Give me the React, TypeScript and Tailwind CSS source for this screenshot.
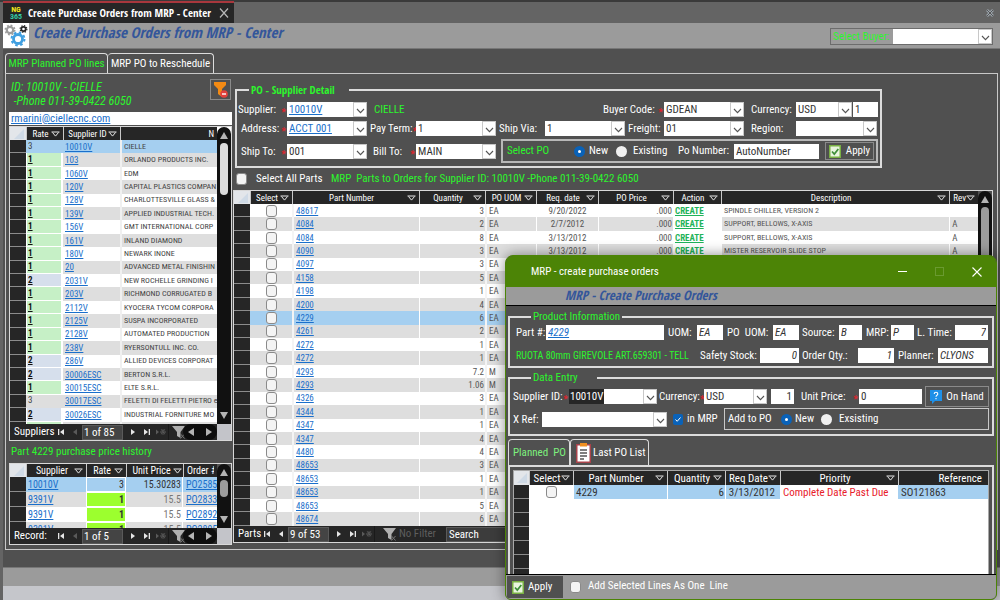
import type { ReactNode } from 'react';

type Opt = { value?: string; label: string; className?: string; link?: boolean; italic?: boolean; selected?: boolean };

const Chevron = () => (
  <span className="pointer-events-none absolute inset-y-0 right-0 flex w-[14px] items-end justify-center border border-[#c8c8c8] bg-white pb-[2px]">
    <svg width="9" height="6" viewBox="0 0 9 6" fill="none" stroke="#555" strokeWidth="1.1"><path d="M1 1l3.5 3.7L8 1" /></svg>
  </span>
);

function Combo({ value = '', label, className = '', link, selected }: Opt) {
  return (
    <span className={`relative block h-[15px] bg-white ${className}`}>
      <select aria-label={label} defaultValue={value} className={`block h-[15px] w-full appearance-none bg-transparent pl-[2px] text-[11px] leading-[15px] outline-none ${selected ? 'text-transparent' : link ? 'text-[#1a6fcb] underline' : 'text-[#333]'}`}>
        <option value={value}>{value}</option>
      </select>
      {selected && <span className="absolute inset-y-0 left-0 bg-[#262626] px-px text-[11px] leading-[15px] text-white" aria-hidden="true">{value}</span>}
      <Chevron />
    </span>
  );
}

function Box({ value = '', label, className = '', link, italic }: Opt) {
  return (
    <input aria-label={label} defaultValue={value} className={`block h-[15px] min-w-0 bg-white px-[2px] text-[11px] leading-[15px] outline-none ${link ? 'text-[#1a6fcb] underline' : 'text-[#333]'} ${italic ? 'italic' : ''} ${className}`} />
  );
}

function Lab({ children, req, className = '' }: { children: ReactNode; req?: boolean; className?: string }) {
  return (
    <span className={`flex h-[15px] shrink-0 items-center justify-between whitespace-pre leading-[13px] ${className}`}>
      <span>{children}</span>
      {req && <span className="self-end pr-px text-[11px] leading-[9px] text-[#e8202a]">*</span>}
    </span>
  );
}

const Filter = () => (
  <svg className="shrink-0" width="9" height="6" viewBox="0 0 9 6" fill="none" stroke="#e8e8e8" strokeWidth="1"><path d="M.5 1h8M1.5 1.5l3 3.6 3-3.6" /></svg>
);

function Th({ children, filter = true, className = '' }: { children: ReactNode; filter?: boolean; className?: string }) {
  return (
    <th className={`overflow-hidden whitespace-nowrap border-l border-[#c8c8c8] bg-[#262626] p-0 font-normal text-white ${className}`}>
      <span className="flex items-center px-[3px]">
        <span className="flex-1 text-center">{children}</span>
        {filter && <Filter />}
      </span>
    </th>
  );
}

const Corner = () => (
  <th className="bg-[#e3e6ea] p-0" aria-label="Select all rows">
    <svg className="ml-auto mr-[2px] block" width="10" height="10" viewBox="0 0 10 10"><path d="M10 0v10H0z" fill="#cfdae6" /></svg>
  </th>
);

const Sel = () => <td className="border-b border-[#8c8c8c] bg-[#262626] p-0" />;

const Up = () => <svg width="8" height="7" viewBox="0 0 8 7"><path d="M4 0l4 7H0z" fill="#b4b4b4" /></svg>;
const Down = () => <svg width="8" height="7" viewBox="0 0 8 7"><path d="M4 7l4-7H0z" fill="#b4b4b4" /></svg>;

function Scroll({ thumb }: { thumb: string }) {
  return (
    <div className="flex w-[14px] shrink-0 flex-col items-center rounded-t-full bg-[#111] py-[5px]">
      <Up />
      <div className={`mt-1 w-[8px] rounded-full ${thumb}`} />
      <span className="mt-auto"><Down /></span>
    </div>
  );
}

function NavIcon({ kind, dim, label }: { kind: 'first' | 'prev' | 'next' | 'last' | 'new'; dim?: boolean; label: string }) {
  const c = dim ? '#5a5a5a' : '#e6e6e6';
  return (
    <button aria-label={label} className="flex h-full w-[14px] items-center justify-center">
      <svg width="10" height="8" viewBox="0 0 10 8" fill={c}>
        {kind === 'first' && <path d="M2 1h1.3v6H2zM8 1v6L4 4z" />}
        {kind === 'prev' && <path d="M7 1v6L3 4z" />}
        {kind === 'next' && <path d="M3 1v6l4-3z" />}
        {kind === 'last' && <path d="M2 1v6l4-3zM6.700 1H8v6H6.700z" />}
        {kind === 'new' && <path d="M0 1.500v5L3 4zM6.600 1h.8v6h-.8zM4 3.600h6v.8H4zM4.700 1.600l.5-.5 4.100 4.800-.5.500zM9.300 1.600l-.5-.5-4.100 4.800.5.500z" />}
      </svg>
    </button>
  );
}

function Nav({ label, pos, wide, prevDim = true }: { label: string; pos: string; wide?: boolean; prevDim?: boolean }) {
  return (
    <div className="flex h-[16px] items-center bg-[#262626] text-[11px] leading-[14px] text-white">
      <span className={wide ? 'w-[26px] pl-[4px]' : 'w-[44px] pl-[4px]'}>{label}</span>
      <NavIcon kind="first" label="First record" />
      <NavIcon kind="prev" dim={prevDim} label="Previous record" />
      <input aria-label={`${label} position`} defaultValue={pos} className="h-[15px] w-[41px] border border-[#5a5a5a] bg-[#444] pl-px text-[11px] text-white outline-none" />
      <span className="w-[3px]" />
      <NavIcon kind="next" label="Next record" />
      <NavIcon kind="last" label="Last record" />
      <NavIcon kind="new" dim label="New record" />
      <span className={`h-full border-l border-[#1a1a1a] ${wide ? 'w-[9px]' : 'w-[4px]'}`} />
      <svg width="15" height="14" viewBox="0 0 15 14" className="shrink-0"><path d="M0 1h13L8.500 7v6L5 11V7z" fill="#b0b0b0" /><path d="M8.500 9l4 4.500M12.500 9l-4 4.500" stroke="#777" strokeWidth="1" /></svg>
      {wide ? (
        <>
          <span className="ml-px mr-[10px] text-[#5e5e5e]">No Filter</span>
          <input aria-label="Search" defaultValue="Search" className="h-[15px] w-[90px] border border-[#5a5a5a] bg-[#3c3c3c] pl-[2px] text-[11px] text-white outline-none" />
        </>
      ) : (
        <>
          <span className="-ml-1 flex h-full flex-1 items-center justify-between rounded-full bg-[#0e0e0e] px-[5px]">
            <svg width="6" height="8" viewBox="0 0 6 8"><path d="M6 0v8L0 4z" fill="#b4b4b4" /></svg>
            <svg width="6" height="8" viewBox="0 0 6 8"><path d="M0 0v8l6-4z" fill="#b4b4b4" /></svg>
          </span>
          <span className="h-full w-[14px] bg-[#c3c4c9]" />
        </>
      )}
    </div>
  );
}

const suppliers: [string, string, string][] = [
  ['3', '10010V', 'CIELLE'], ['1', '103', 'ORLANDO PRODUCTS INC.'], ['1', '1060V', 'EDM'],
  ['1', '120V', 'CAPITAL PLASTICS COMPAN'], ['1', '128V', 'CHARLOTTESVILLE GLASS &'],
  ['1', '139V', 'APPLIED INDUSTRIAL TECH.'], ['1', '156V', 'GMT INTERNATIONAL CORP'],
  ['1', '161V', 'INLAND DIAMOND'], ['1', '180V', 'NEWARK INONE'], ['1', '20', 'ADVANCED METAL FINISHIN'],
  ['2', '2031V', 'NEW ROCHELLE GRINDING I'], ['1', '203V', 'RICHMOND CORRUGATED B'],
  ['1', '2112V', 'KYOCERA TYCOM CORPORA'], ['1', '2125V', 'SUSPA INCORPORATED'],
  ['1', '2128V', 'AUTOMATED PRODUCTION'], ['1', '238V', 'RYERSONTULL INC. CO.'],
  ['2', '286V', 'ALLIED DEVICES CORPORAT'], ['2', '30006ESC', 'BERTON S.R.L.'],
  ['1', '30015ESC', 'ELTE S.R.L.'], ['3', '30017ESC', 'FELETTI DI FELETTI PIETRO e'],
  ['2', '30026ESC', 'INDUSTRIAL FORNITURE MO'], ['1', '', ''],
];

const parts: string[][] = [
  ['48617', '3', 'EA', '9/20/2022', 'SPINDLE CHILLER, VERSION 2', ''],
  ['4084', '2', 'EA', '2/7/2012', 'SUPPORT, BELLOWS, X-AXIS', 'A'],
  ['4084', '8', 'EA', '3/13/2012', 'SUPPORT, BELLOWS, X-AXIS', 'A'],
  ['4090', '3', 'EA', '3/13/2012', 'MISTER RESERVOIR SLIDE STOP', 'A'],
  ['4097', '3', 'EA'], ['4158', '5', 'EA'], ['4198', '1', 'EA'], ['4200', '4', 'EA'], ['4229', '6', 'EA'],
  ['4261', '2', 'EA'], ['4272', '1', 'EA'], ['4272', '1', 'EA'], ['4293', '7.2', 'M'], ['4293', '1.06', 'M'],
  ['4326', '3', 'EA'], ['4344', '1', 'EA'], ['4347', '1', 'EA'], ['4347', '4', 'EA'], ['4480', '4', 'EA'],
  ['48653', '3', 'EA'], ['48653', '1', 'EA'], ['48653', '1', 'EA'], ['48653', '5', 'EA'], ['48674', '6', 'EA'],
];

const rowBg = (i: number, sel: number) => (i === sel ? 'bg-[#a5cff0]' : i % 2 ? 'bg-[#dedede]' : 'bg-white');

const Link = ({ children }: { children: ReactNode }) => <a href="#" className="text-[#1a6fcb] underline">{children}</a>;

const Tick = ({ label, className = '' }: { label: string; className?: string }) => (
  <input type="checkbox" aria-label={label} className={`block h-[12px] w-[11px] appearance-none rounded-[3px] border border-[#8a8a8a] bg-[#f4f4f4] ${className}`} />
);

const Radio = ({ name, label, on }: { name: string; label: string; on?: boolean }) => (
  <input type="radio" name={name} aria-label={label} defaultChecked={on} className="block size-[11px] shrink-0 appearance-none rounded-full bg-[#f0f0f0] checked:border-4 checked:border-[#0a62b8] checked:bg-white" />
);

const Check = () => (
  <svg width="12" height="13" viewBox="0 0 12 13"><rect x=".75" y=".75" width="10.500" height="11.500" fill="#e9f5df" stroke="#79b043" strokeWidth="1.500" /><path d="M3 6.500l2.300 2.600L9.300 4" fill="none" stroke="#3f8f3a" strokeWidth="1.700" /></svg>
);

function Gear({ cx, cy, r, color, w }: { cx: number; cy: number; r: number; color: string; w: number }) {
  return (
    <g fill="none" stroke={color}>
      <circle cx={cx} cy={cy} r={r} strokeWidth={w} />
      <circle cx={cx} cy={cy} r={r + w * 0.7} strokeWidth={w * 0.7} strokeDasharray={`${(r + w * 0.7) * 0.393} ${(r + w * 0.7) * 0.393}`} />
    </g>
  );
}

function Header() {
  return (
    <header>
      <div className="flex h-[23px] justify-between border-t-2 border-[#3a3a3a] bg-[#646464]">
        <div className="-mt-px ml-[3px] flex w-[231px] items-center border-t-2 border-[#a8373d] bg-[#262626] pl-[6px]">
          <span className="flex w-[14px] flex-col text-center text-[8px] font-bold leading-[7px]">
            <span className="text-[#f4e61c]">NG</span><span className="text-[#35c9a4]">365</span>
          </span>
          <span className="ml-[5px] flex-1 whitespace-nowrap text-[11px] font-bold text-white [font-family:'Open_Sans_Condensed','Roboto_Condensed',sans-serif]">Create Purchase Orders from MRP - Center</span>
          <button aria-label="Close tab" className="mr-[5px]"><svg width="10" height="10" viewBox="0 0 10 10" stroke="#b8b8b8" strokeWidth="1.200"><path d="M1 .5l8 9M9 .5l-8 9" /></svg></button>
        </div>
        <button aria-label="Close window" className="mr-[6px]"><svg width="8" height="8" viewBox="0 0 8 8" stroke="#9aa3ab" strokeWidth="2.500"><path d="M1 1l6 6M7 1L1 7" /><path d="M1 1l6 6M7 1L1 7" stroke="#555" strokeWidth="1" /></svg></button>
      </div>
      <div className="ml-[3px] flex h-[26px] items-start border-b border-[#777] bg-[#9b9b9b]">
        <svg width="26" height="25" viewBox="0 0 26 25" className="bg-white">
          <Gear cx={7} cy={7} r={3.2} color="#9c9c9c" w={2.2} />
          <Gear cx={20.5} cy={6} r={2.200} color="#262626" w={1.700} />
          <Gear cx={15} cy={16} r={4.500} color="#409fe0" w={2.800} />
        </svg>
        <h1 className="ml-1 flex-1 whitespace-nowrap text-[15px] font-bold italic leading-[19px] text-[#34569a] [font-family:'Open_Sans_Condensed','Roboto_Condensed',sans-serif]">Create Purchase Orders from MRP - Center</h1>
        <div className="mr-[7px] mt-[5px] flex h-[17px] w-[163px] border border-[#6c6c6c]">
          <span className="w-[62px] pl-[2px] text-[11px] leading-[15px] text-[#2df52d]">Select Buyer:</span>
          <Combo label="Select Buyer" className="flex-1" />
        </div>
      </div>
    </header>
  );
}

function LeftPane() {
  return (
    <section className="w-[223px] shrink-0">
      <div className="flex items-start justify-between pt-[5px]">
        <p className="whitespace-pre pl-[2px] pt-px text-[12px] italic leading-[14px] text-[#2df52d]">{'ID: 10010V - CIELLE\n -Phone 011-39-0422 6050'}</p>
        <button aria-label="Clear filter" className="mr-px flex h-[21px] w-[21px] items-center justify-center border border-[#8a8a8a]">
          <svg width="15" height="17" viewBox="0 0 15 17"><path d="M1 1h12v3L9 8v8l-4-3V8L1 4z" fill="#f28a14" /><circle cx="11" cy="13" r="3.800" fill="#e2403c" /><path d="M9 13h4" stroke="#fff" strokeWidth="1.400" /></svg>
        </button>
      </div>
      <div className="mt-[4px] h-[13px] bg-white pl-[2px] text-[11px] leading-[13px]"><Link>rmarini@ciellecnc.com</Link></div>
      <div className="mt-[1px] border border-[#d8d8d8]">
        <div className="flex h-[297px] overflow-hidden bg-white">
          <div className="min-w-0 flex-1">
            <table className="h-[308px] w-full table-fixed border-separate border-spacing-0 text-[9px] leading-[12px] text-[#444]">
              <colgroup><col className="w-[16px]" /><col className="w-[37px]" /><col className="w-[57px]" /><col /></colgroup>
              <thead><tr className="h-[13px]"><Corner /><Th>Rate</Th><Th>Supplier ID</Th><Th filter={false} className="[&_span]:text-right">N</Th></tr></thead>
              <tbody>
                {suppliers.map(([rate, id, name], i) => (
                  <tr key={i} className={rowBg(i, 0)}>
                    <Sel />
                    <td className={`border-b border-l border-r-2 p-0 pl-px leading-[11px] ${rate === '1' ? 'border-white bg-[#c6f0c6]' : rate === '2' ? 'border-white bg-[#d6dfec]' : 'border-transparent'}`}>
                      {id && <span className={rate === '3' ? '' : 'font-bold text-[#111] underline'}>{rate}</span>}
                    </td>
                    <td className="h-[12px] p-0 pl-[2px]">{id ? <Link>{id}</Link> : '\u00a0'}</td>
                    <td className="overflow-hidden whitespace-nowrap border-l-2 border-[#f0f0f0] p-0 pl-[2px] text-[8px]">{name}</td>
                  </tr>
                ))}
              </tbody>
            </table>
          </div>
          <Scroll thumb="h-[52px] bg-[#dcdcdc]" />
        </div>
        <Nav label="Suppliers" pos="1 of 85" />
      </div>
      <h2 className="pl-[2px] text-[11px] leading-[22px] text-[#2df52d]">Part 4229 purchase price history</h2>
      <div className="border border-[#d8d8d8]">
        <div className="flex h-[64px] overflow-hidden">
          <div className="min-w-0 flex-1 bg-white">
            <table className="h-[72px] w-full table-fixed border-separate border-spacing-0 text-[10px] leading-[13px] text-[#333]">
              <colgroup><col className="w-[16px]" /><col className="w-[60px]" /><col className="w-[40px]" /><col className="w-[57px]" /><col /></colgroup>
              <thead><tr><Corner /><Th>Supplier</Th><Th>Rate</Th><Th className="[&_svg]:-mr-[2px]">Unit Price</Th><Th filter={false} className="[&_span]:overflow-hidden [&_span]:text-left">Order #</Th></tr></thead>
              <tbody>
                {[['10010V', '3', '15.30283', 'PO2585'], ['9391V', '1', '15.5', 'PO2833'], ['9391V', '1', '15.5', 'PO2892'], ['9391V', '1', '15.5', 'PO2895']].map((r, i) => (
                  <tr key={i} className={rowBg(i, 0)}>
                    <Sel />
                    <td className="p-0 pl-[2px]"><Link>{r[0]}</Link></td>
                    <td className={`border border-white p-0 pr-px text-right ${r[1] === '1' ? 'bg-[#9cff2e] font-bold' : ''}`}>{r[1]}</td>
                    <td className={`border-r border-white p-0 pr-px text-right ${i ? 'text-[#777]' : ''}`}>{r[2]}</td>
                    <td className="overflow-hidden p-0 pl-[3px]"><Link>{r[3]}</Link></td>
                  </tr>
                ))}
              </tbody>
            </table>
          </div>
          <Scroll thumb="h-[17px] bg-[#9c9c9c]" />
        </div>
        <Nav label="Record:" pos="1 of 5" />
      </div>
    </section>
  );
}

function SupplierDetail() {
  return (
    <fieldset className="ml-[2px] mt-[8px] h-[86px] w-[647px] border-2 border-[#dcdcdc] px-px">
      <legend className="ml-[11px] w-[100px] px-[2px] text-[11px] font-bold leading-[16px] text-[#2df52d] [font-family:'Open_Sans_Condensed','Roboto_Condensed',sans-serif]">PO - Supplier Detail</legend>
      <div className="grid grid-cols-[49px_80px_49px_80px_49px_80px_39px_80px_52px_1fr] gap-y-[4px] pt-[4px]">
        <Lab req>Supplier:</Lab><Combo label="Supplier" value="10010V" link />
        <Lab className="col-span-4 pl-[7px] text-[#2df52d]">CIELLE</Lab>
        <Lab req className="-ml-[22px]">Buyer Code:</Lab><Combo label="Buyer Code" value="GDEAN" />
        <Lab className="pl-[7px]">Currency:</Lab>
        <div className="flex gap-px"><Combo label="Currency" value="USD" className="w-[56px]" /><Box label="Exchange rate" value="1" className="w-[25px]" /></div>
        <Lab req className="pl-[3px]">Address:</Lab><Combo label="Address" value="ACCT 001" link />
        <Lab req className="pl-[3px]">Pay Term:</Lab><Combo label="Pay Term" value="1" />
        <Lab className="pl-[3px]">Ship Via:</Lab><Combo label="Ship Via" value="1" />
        <Lab className="pl-[3px]">Freight:</Lab><Combo label="Freight" value="01" />
        <Lab className="pl-[7px]">Region:</Lab><Combo label="Region" className="mr-[2px]" />
      </div>
      <div className="mt-[3px] grid grid-cols-[49px_80px_49px_80px_1fr] items-center">
        <Lab req className="pl-[3px]">Ship To:</Lab><Combo label="Ship To" value="001" />
        <Lab req className="pl-[6px]">Bill To:</Lab><Combo label="Bill To" value="MAIN" />
        <div className="ml-[5px] mr-px flex h-[24px] items-center border-2 border-[#b8b8b8] pl-[4px]">
          <span className="w-[67px] text-[#2df52d]">Select PO</span>
          <Radio name="po" label="New" on /><span className="ml-[4px] w-[27px]">New</span>
          <Radio name="po" label="Existing" /><span className="ml-[6px] w-[45px]">Existing</span>
          <span className="w-[56px]">Po Number:</span>
          <Box label="Po Number" value="AutoNumber" className="w-[85px]" />
          <button className="ml-auto mr-[2px] flex h-[18px] w-[49px] items-center justify-center gap-[5px] border border-[#8a8a8a]"><Check />Apply</button>
        </div>
      </div>
    </fieldset>
  );
}

function PartsGrid() {
  return (
    <div className="border border-[#d8d8d8]">
      <div className="flex h-[335px] overflow-hidden">
        <table className="h-[335px] min-w-0 flex-1 table-fixed border-separate border-spacing-0 bg-white text-[9px] leading-[12px] text-[#555]">
          <colgroup><col className="w-[16px]" /><col className="w-[42px]" /><col className="w-[127px]" /><col className="w-[66px]" /><col className="w-[51px]" /><col className="w-[62px]" /><col className="w-[75px]" /><col className="w-[48px]" /><col /><col className="w-[26px]" /></colgroup>
          <thead><tr className="h-[13px]"><Corner /><Th>Select</Th><Th>Part Number</Th><Th>Quantity</Th><Th>PO UOM</Th><Th>Req. date</Th><Th>PO Price</Th><Th>Action</Th><Th>Description</Th><Th>Rev</Th></tr></thead>
          <tbody>
            {parts.map((r, i) => (
              <tr key={i} className={rowBg(i, 8)}>
                <Sel />
                <td className="p-0"><Tick label={`Select part ${r[0]}`} className="mx-auto" /></td>
                <td className="border-l-2 border-[#f4f4f4] p-0 pl-[2px]"><Link>{r[0]}</Link></td>
                <td className="border-l border-white p-0 pr-px text-right">{r[1]}</td>
                <td className="border-l-2 border-[#f4f4f4] p-0 pl-[2px]">{r[2]}</td>
                <td className="border-l border-white p-0 text-center">{r[3]}</td>
                <td className="border-l border-white p-0 pr-px text-right">{r[3] && '.000'}</td>
                <td className="border-x border-white bg-white p-0 pl-px">{r[3] && <a href="#" className="font-bold text-[#1fb35a] underline">CREATE</a>}</td>
                <td className="border-l border-white p-0 pl-[2px] text-[8px]">{r[4]}</td>
                <td className="border-l border-white p-0 pl-[2px]">{r[5]}</td>
              </tr>
            ))}
          </tbody>
        </table>
        <Scroll thumb="h-[150px] bg-[#9c9c9c]" />
      </div>
      <Nav label="Parts" pos="9 of 53" wide prevDim={false} />
    </div>
  );
}

function Dialog() {
  return (
    <div role="dialog" aria-label="MRP - create purchase orders" className="absolute right-[3px] top-[255px] flex h-[345px] w-[492px] flex-col overflow-hidden rounded-t-[8px] rounded-b-[6px] border border-[#4c8406] bg-[#505050] shadow-[0_0_14px_rgba(0,0,0,0.45)]">
      <div className="flex h-[31px] shrink-0 items-center bg-[#4c8406] pl-[25px] pr-[14px]">
        <span className="flex-1 text-[11px]">MRP - create purchase orders</span>
        <div className="flex items-center gap-[28px]">
          <button aria-label="Minimize" className="h-px w-[9px] bg-white" />
          <button aria-label="Maximize" className="size-[9px] border border-[#6a9a30]" />
          <button aria-label="Close"><svg width="10" height="10" viewBox="0 0 10 10" stroke="#fff" strokeWidth="1.100"><path d="M.5.5l9 9M9.500.5l-9 9" /></svg></button>
        </div>
      </div>
      <h2 className="h-[19px] shrink-0 border-b border-black bg-[#9b9b9b] pl-[59px] text-[13px] font-bold italic leading-[17px] text-[#34569a] [font-family:'Open_Sans_Condensed','Roboto_Condensed',sans-serif]">MRP - Create Purchase Orders</h2>
      <div className="px-[2px] pt-[3px]">
        <fieldset className="h-[59px] w-full min-w-0 border-2 border-[#dcdcdc] pl-[6px] pr-[4px]">
          <legend className="ml-[15px] px-[2px] text-[11px] leading-[16px] text-[#2df52d]">Product Information</legend>
          <div className="flex">
            <Lab className="w-[30px]">Part #:</Lab><Box label="Part #" value="4229" link italic className="w-0 flex-1" />
            <Lab className="ml-[4px] w-[29px]">UOM:</Lab><Box label="UOM" value="EA" italic className="w-[26px]" />
            <Lab className="ml-[4px] w-[46px]">{'PO  UOM:'}</Lab><Box label="PO UOM" value="EA" italic className="w-[26px]" />
            <Lab className="ml-[3px] w-[37px]">Source:</Lab><Box label="Source" value="B" italic className="w-[23px]" />
            <Lab className="ml-[4px] w-[25px]">MRP:</Lab><Box label="MRP" value="P" italic className="w-[23px]" />
            <Lab className="ml-[3px] w-[38px]">L. Time:</Lab><Box label="L. Time" value="7" italic className="w-[33px] text-right" />
          </div>
          <div className="mt-[8px] flex">
            <span className="min-w-0 flex-1 overflow-hidden whitespace-nowrap text-[10px] leading-[15px] text-[#2df52d]">RUOTA 80mm GIREVOLE ART.659301 - TELL</span>
            <Lab className="ml-[4px] w-[60px]">Safety Stock:</Lab><Box label="Safety Stock" value="0" italic className="w-[39px] text-right" />
            <Lab className="ml-[3px] w-[56px]">Order Qty.:</Lab><Box label="Order Qty." value="1" italic className="w-[36px] text-right" />
            <Lab className="ml-[4px] w-[40px]">Planner:</Lab><Box label="Planner" value="CLYONS" italic className="w-[50px]" />
          </div>
        </fieldset>
        <fieldset className="mt-[2px] h-[66px] w-full min-w-0 border-2 border-[#dcdcdc] pl-[3px] pr-[3px]">
          <legend className="ml-[18px] w-[66px] px-[2px] text-[11px] leading-[16px] text-[#2df52d]">Data Entry</legend>
          <div className="flex h-[21px] items-center">
            <Lab req className="w-[56px]">Supplier ID:</Lab><Combo label="Supplier ID" value="10010V" selected className="w-[88px] shrink-0" />
            <Lab req className="ml-[2px] w-[45px]">Currency:</Lab><Combo label="Currency" value="USD" className="w-[63px] shrink-0" />
            <Box label="Rate" value="1" className="ml-[4px] w-[23px] text-right" />
            <Lab req className="ml-[7px] w-[58px]">Unit Price:</Lab><Box label="Unit Price" value="0" className="w-0 flex-1" />
            <button className="ml-[3px] flex h-[21px] w-[64px] shrink-0 items-center justify-center gap-[4px] border border-[#8a8a8a]">
              <svg width="12" height="14" viewBox="0 0 12 14"><path d="M0 0h12v11H5l-3 3v-3H0z" fill="#1e90e8" /><path d="M4.200 4c0-2.300 3.600-2.300 3.600 0 0 1.300-1.800 1.200-1.800 2.800M6 8v1.200" fill="none" stroke="#fff" strokeWidth="1.100" /></svg>
              On Hand
            </button>
          </div>
          <div className="mt-px flex items-center">
            <Lab className="w-[29px]">X Ref:</Lab><Combo label="X Ref" className="w-[125px] shrink-0" />
            <label className="ml-[6px] flex items-center gap-[4px] whitespace-nowrap">
              <span className="relative block h-[11px] w-[10px]">
                <input type="checkbox" defaultChecked className="block h-[11px] w-[10px] appearance-none rounded-[2px] bg-[#0a62b8]" />
                <svg className="pointer-events-none absolute left-[2px] top-[3px]" width="6" height="5" viewBox="0 0 6 5" fill="none" stroke="#fff"><path d="M.5 2.500l1.700 1.800L5.500.5" /></svg>
              </span>
              in MRP
            </label>
            <div className="ml-auto flex h-[22px] w-[265px] items-center border border-[#c8c8c8] pl-[3px]">
              <span className="w-[53px]">Add to PO</span>
              <Radio name="add" label="New" on /><span className="ml-[3px] w-[26px]">New</span>
              <Radio name="add" label="Existing" /><span className="ml-[7px]">Exsisting</span>
            </div>
          </div>
        </fieldset>
      </div>
      <div className="mt-[3px] flex px-[2px]">
        <button className="h-[26px] w-[62px] rounded-t-[4px] border border-b-0 border-[#dcdcdc] text-left pl-[4px] whitespace-pre text-[#7ef07e]">{'Planned  PO'}</button>
        <button className="flex h-[26px] w-[79px] items-center gap-[2px] rounded-t-[4px] border border-b-0 border-[#dcdcdc] pl-[5px]">
          <svg width="15" height="20" viewBox="0 0 15 20"><rect x=".75" y="1.750" width="13.500" height="17.500" fill="#fff" stroke="#a8434a" strokeWidth="1.500" /><path d="M4 0h7v3.500H4z" fill="#f09020" /><path d="M4 7h7M4 10h7M4 13h7M4 16h4" stroke="#555" strokeWidth="1.300" /></svg>
          Last PO List
        </button>
      </div>
      <div className="mx-[2px] min-h-0 flex-1 border-2 border-b-0 border-[#dcdcdc] px-[3px] pt-[3px]">
        <div className="h-full overflow-hidden border-x border-t border-[#a8a8a8] bg-white">
          <table className="w-full table-fixed border-separate border-spacing-0 leading-[13px] text-[#333]">
            <colgroup><col className="w-[15px]" /><col className="w-[44px]" /><col className="w-[94px]" /><col className="w-[58px]" /><col className="w-[55px]" /><col className="w-[118px]" /><col /></colgroup>
            <thead><tr className="h-[14px]"><Corner /><Th>Select</Th><Th>Part Number</Th><Th>Quantity</Th><Th>Req Date</Th><Th>Priority</Th><Th filter={false} className="[&_span]:pr-[3px] [&_span]:text-right">Reference</Th></tr></thead>
            <tbody>
              <tr className="h-[14px] bg-[#a5cff0]">
                <Sel />
                <td className="bg-white p-0"><Tick label="Select part 4229" className="mx-auto" /></td>
                <td className="border-l border-white p-0 pl-[2px]">4229</td>
                <td className="border-l border-white p-0 pr-px text-right">6</td>
                <td className="border-l border-white p-0 pr-[5px] text-right">3/13/2012</td>
                <td className="whitespace-nowrap border-l border-white bg-white p-0 pl-[2px] text-[#e8202a]">Complete Date Past Due</td>
                <td className="p-0 pl-[3px]">SO121863</td>
              </tr>
              {[0, 1, 2, 3, 4, 5].map((i) => <tr key={i} className="h-[14px]"><Sel /><td colSpan={6} className="bg-white p-0" /></tr>)}
            </tbody>
          </table>
        </div>
      </div>
      <footer className="flex h-[25px] shrink-0 items-center border-t border-black bg-[#9b9b9b] pl-px">
        <button className="flex h-[22px] w-[56px] items-center gap-[4px] bg-[#505050] pl-[5px]"><Check />Apply</button>
        <label className="ml-[7px] flex items-center gap-[7px]"><Tick label="Add selected lines" /><span className="whitespace-pre pb-[3px]">{'Add Selected Lines As One  Line'}</span></label>
      </footer>
    </div>
  );
}

export default function App() {
  return (
    <div className="relative flex min-h-screen flex-col bg-[#646464] text-[11px] leading-[14px] text-white [font-family:'Roboto_Condensed',Roboto,sans-serif]">
      <Header />
      <main className="ml-[3px] bg-[#505050] pb-[17px] pl-[2px] pr-[2px] pt-[4px]">
        <nav className="flex">
          <button className="h-[20px] w-[103px] rounded-t-[4px] border border-b-0 border-[#dcdcdc] text-[#2df52d]">MRP Planned PO lines</button>
          <button className="h-[20px] w-[106px] rounded-t-[4px] border border-b-0 border-l-0 border-[#dcdcdc]">MRP PO to Reschedule</button>
        </nav>
        <div className="flex border border-[#c8c8c8] pb-[4px] pl-[3px]">
          <LeftPane />
          <section className="ml-px mr-[4px] min-w-0 flex-1">
            <SupplierDetail />
            <div className="mb-[4px] mt-[3px] flex h-[15px] items-center pl-[3px]">
              <label className="flex w-[95px] items-center gap-[9px]"><Tick label="Select All Parts" />Select All Parts</label>
              <span className="whitespace-pre text-[#2df52d]">{'MRP  Parts to Orders for Supplier ID: 10010V -Phone 011-39-0422 6050'}</span>
            </div>
            <PartsGrid />
          </section>
        </div>
      </main>
      <div className="ml-[3px] h-[19px] shrink-0 border-t border-[#777] bg-[#9b9b9b]" />
      <div className="ml-[3px] flex-1 bg-[#c5c6cb]" />
      <Dialog />
    </div>
  );
}
